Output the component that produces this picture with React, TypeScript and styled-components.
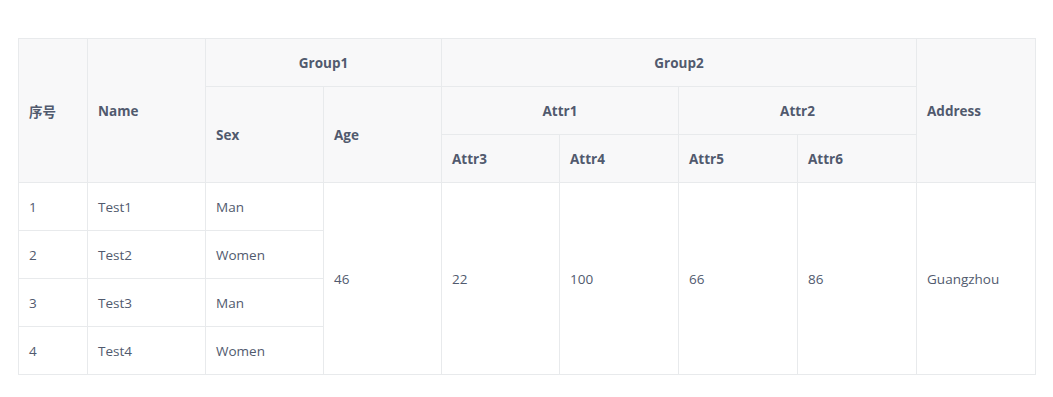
import React from "react";
import styled, { createGlobalStyle } from "styled-components";

const Global = createGlobalStyle`
  html, body { margin: 0; padding: 0; background: #fff; }
  body { font-family: "Open Sans", "Noto Sans CJK SC", sans-serif; }
`;

const Page = styled.div`
  padding: 38px 17px 0 18px;
`;

const Table = styled.table`
  width: 1018px;
  border-collapse: collapse;
  table-layout: fixed;
  font-size: 13.5px;
  color: #515a6e;
`;

const Th = styled.th<{ $center?: boolean }>`
  height: 48px;
  padding: 0 10px;
  background: #f8f8f9;
  border: 1px solid #e8eaec;
  font-weight: 700;
  text-align: ${(p) => (p.$center ? "center" : "left")};
  box-sizing: border-box;
`;

const Td = styled.td`
  height: 48px;
  padding: 0 10px;
  border: 1px solid #e8eaec;
  text-align: left;
  box-sizing: border-box;
`;

const widths = [69, 118, 118, 118, 118, 119, 119, 119, 119];

const rows = [
  { id: 1, name: "Test1", sex: "Man" },
  { id: 2, name: "Test2", sex: "Women" },
  { id: 3, name: "Test3", sex: "Man" },
  { id: 4, name: "Test4", sex: "Women" },
];

export default function App() {
  return (
    <>
      <Global />
      <Page>
        <Table>
          <colgroup>
            {widths.map((w, i) => (
              <col key={i} style={{ width: w }} />
            ))}
          </colgroup>
          <thead>
            <tr>
              <Th rowSpan={3}>序号</Th>
              <Th rowSpan={3}>Name</Th>
              <Th colSpan={2} $center>Group1</Th>
              <Th colSpan={4} $center>Group2</Th>
              <Th rowSpan={3}>Address</Th>
            </tr>
            <tr>
              <Th rowSpan={2}>Sex</Th>
              <Th rowSpan={2}>Age</Th>
              <Th colSpan={2} $center>Attr1</Th>
              <Th colSpan={2} $center>Attr2</Th>
            </tr>
            <tr>
              <Th>Attr3</Th>
              <Th>Attr4</Th>
              <Th>Attr5</Th>
              <Th>Attr6</Th>
            </tr>
          </thead>
          <tbody>
            {rows.map((r, i) => (
              <tr key={r.id}>
                <Td>{r.id}</Td>
                <Td>{r.name}</Td>
                <Td>{r.sex}</Td>
                {i === 0 && (
                  <>
                    <Td rowSpan={4}>46</Td>
                    <Td rowSpan={4}>22</Td>
                    <Td rowSpan={4}>100</Td>
                    <Td rowSpan={4}>66</Td>
                    <Td rowSpan={4}>86</Td>
                    <Td rowSpan={4}>Guangzhou</Td>
                  </>
                )}
              </tr>
            ))}
          </tbody>
        </Table>
      </Page>
    </>
  );
}
